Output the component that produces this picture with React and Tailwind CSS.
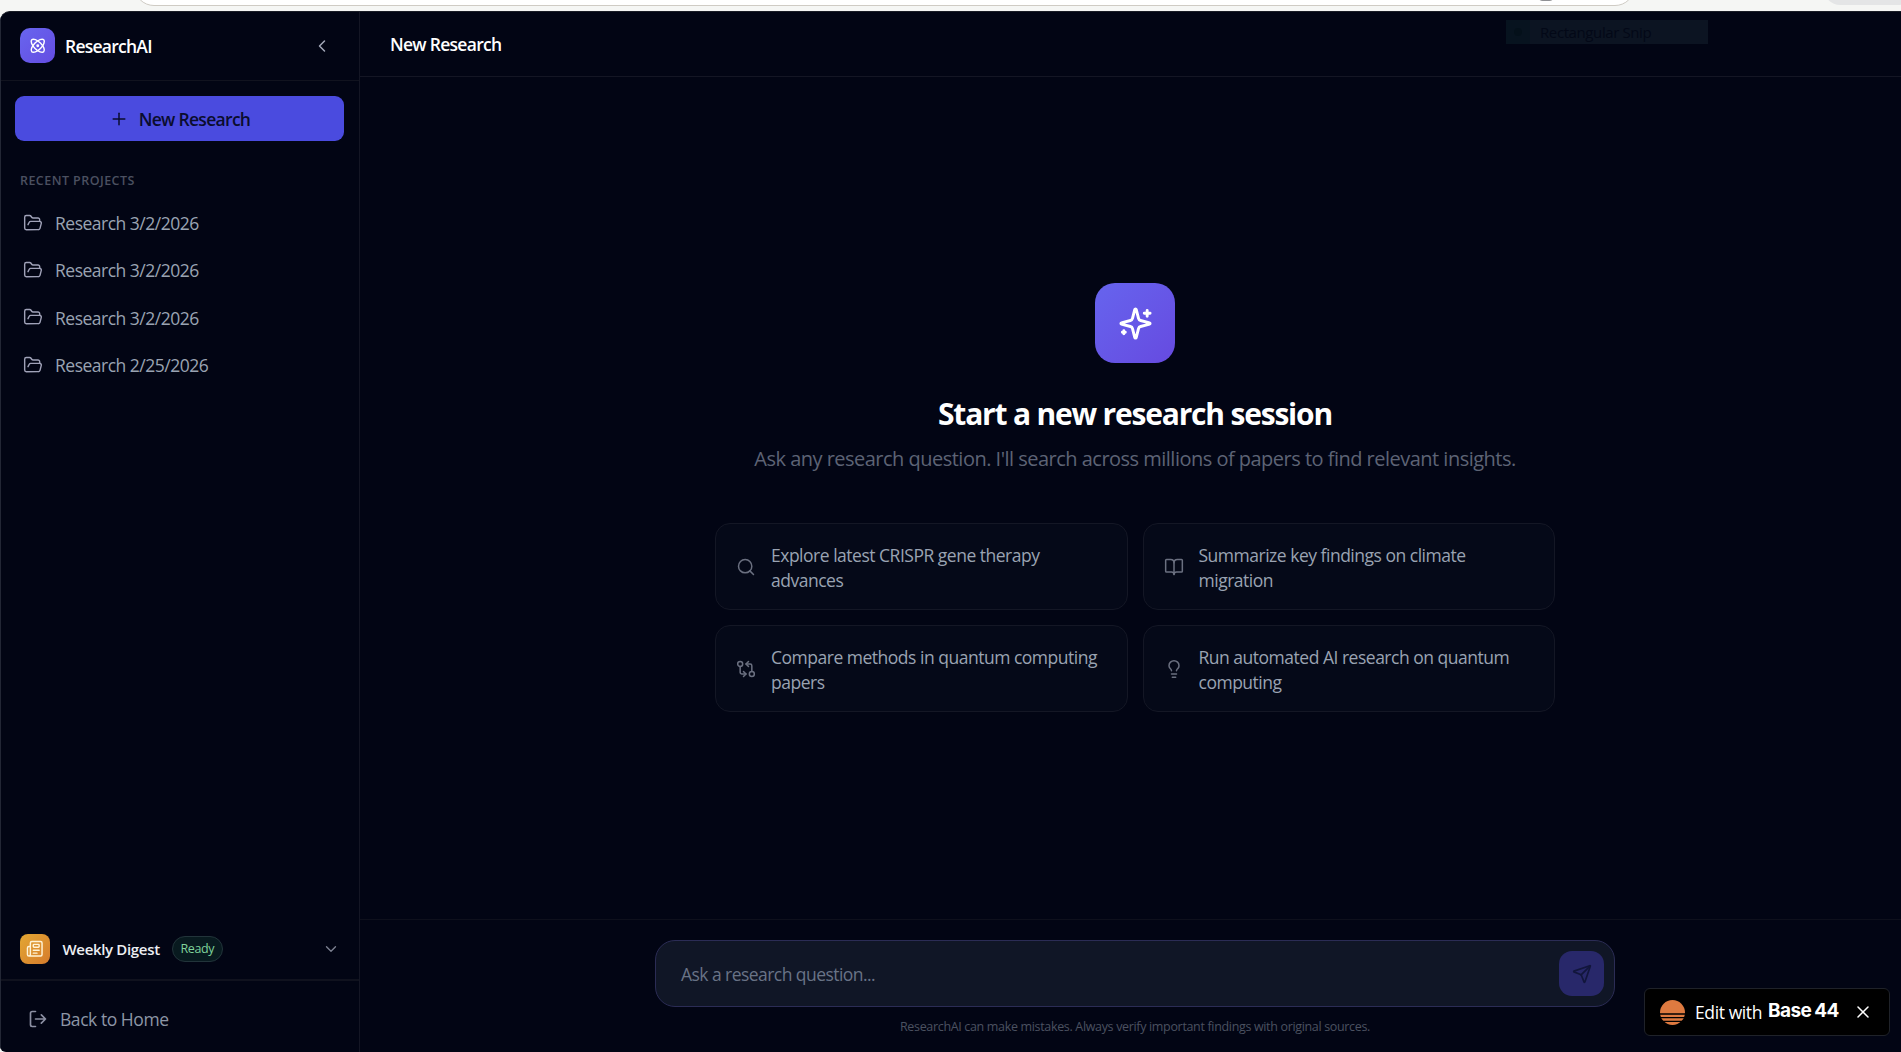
import { Atom, BookOpen, ChevronDown, ChevronLeft, FolderOpen, GitCompareArrows, Lightbulb, Newspaper, Plus, Search, Send, X } from 'lucide-react';

const PROJECTS = ['Research 3/2/2026', 'Research 3/2/2026', 'Research 3/2/2026', 'Research 2/25/2026'];

const SUGGESTIONS = [
    { icon: Search, lines: ['Explore latest CRISPR gene therapy', 'advances'] },
    { icon: BookOpen, lines: ['Summarize key findings on climate', 'migration'] },
    { icon: GitCompareArrows, lines: ['Compare methods in quantum computing', 'papers'] },
    { icon: Lightbulb, lines: ['Run automated AI research on quantum', 'computing'] },
];

function SparklesIcon({ className }) {
    return (
        <svg viewBox="0 0 24 24" fill="none" stroke="currentColor" strokeWidth="2" strokeLinecap="round" strokeLinejoin="round" className={className}>
            <path d="M9.937 15.5A2 2 0 0 0 8.5 14.063l-6.135-1.582a.5.5 0 0 1 0-.962L8.5 9.936A2 2 0 0 0 9.937 8.5l1.582-6.135a.5.5 0 0 1 .963 0L14.063 8.5A2 2 0 0 0 15.5 9.937l6.135 1.581a.5.5 0 0 1 0 .964L15.5 14.063a2 2 0 0 0-1.437 1.437l-1.582 6.135a.5.5 0 0 1-.963 0z" />
            <path d="M20 3v4M22 5h-4M4 17v2M5 18H3" />
        </svg>
    );
}

function ExitIcon({ className }) {
    return (
        <svg viewBox="0 0 24 24" fill="none" stroke="currentColor" strokeWidth="2" strokeLinecap="round" strokeLinejoin="round" className={className}>
            <path d="M9 21H5a2 2 0 0 1-2-2V5a2 2 0 0 1 2-2h4" />
            <path d="m16 17 5-5-5-5M21 12H9" />
        </svg>
    );
}

function SunLogo({ className }) {
    return (
        <svg viewBox="0 0 25 25" className={className}>
            <circle cx="12.5" cy="12.5" r="12.5" fill="#de7a40" />
            <path d="M0 14h25M0 17.6h25M0 21.4h25" stroke="#000" strokeWidth="1.3" />
        </svg>
    );
}

function BrowserEdge() {
    return (
        <div className="relative h-[11px] shrink-0 overflow-hidden bg-[#f5f6f4]">
            <div className="absolute -top-[35px] left-[134px] h-[41px] w-[1501px] rounded-[20px] border border-[#cfcbc4] bg-white" />
            <div className="absolute -top-[8px] left-[1538px] h-[9px] w-4 rounded-full bg-[#8f9094]" />
            <div className="absolute -top-[30px] left-[1824px] h-[35px] w-[90px] rounded-2xl bg-[#e4e5e6]" />
        </div>
    );
}

function Sidebar() {
    return (
        <aside className="flex w-[360px] shrink-0 flex-col border-r border-l border-r-[#141624] border-l-[#232735]">
            <div className="flex h-[69px] shrink-0 items-center border-b border-[#11131f] pr-[27px] pb-px pl-[19px]">
                <div className="flex size-[35px] items-center justify-center rounded-[10px] bg-gradient-to-br from-[#6865ee] to-[#644ce2]">
                    <Atom className="size-[17.5px] text-white" />
                </div>
                <span className="ml-2.5 pt-px text-[17.5px] font-semibold tracking-[-0.75px] text-white">ResearchAI</span>
                <ChevronLeft className="ml-auto size-5 text-[#a3a8b8]" strokeWidth={1.8} />
            </div>

            <div className="pt-[15px] pr-[15px] pl-[14px]">
                <button className="flex h-[45px] w-full items-center justify-center gap-[10px] rounded-[9px] bg-[#4a4bdf] text-[#0a0d2e]">
                    <Plus className="size-5" strokeWidth={1.8} />
                    <span className="pt-px text-[17.5px] font-[550] tracking-[-0.7px]">New Research</span>
                </button>
            </div>

            <h2 className="mt-[30px] ml-[19px] text-[12.5px] leading-5 font-[550] tracking-[0.45px] text-[#4b5060]">RECENT PROJECTS</h2>
            <ul className="mt-2.5">
                {PROJECTS.map((name, i) => (
                    <li key={i} className="flex h-[47.4px] items-center gap-3 pl-[22px] text-[#9aa3b2]">
                        <FolderOpen className="-mt-1 size-5 text-[#a0a2b8]" strokeWidth={1.7} />
                        <span className="-mt-[3px] text-[17.5px] tracking-[-0.5px]">{name}</span>
                    </li>
                ))}
            </ul>

            <div className="mt-auto flex h-[60px] shrink-0 items-center pr-[19px] pl-[19px]">
                <div className="flex size-[30px] items-center justify-center rounded-[8px] bg-gradient-to-br from-[#e3a733] to-[#d57b2c]">
                    <Newspaper className="size-[17.5px] text-[#fff3d6]" />
                </div>
                <span className="ml-[12.5px] pt-px text-[15px] font-semibold tracking-[-0.33px] text-[#eceef2]">Weekly Digest</span>
                <span className="ml-3 flex h-[26px] w-[51px] items-center justify-center rounded-full border border-[#22343a] bg-[#081a1f] pt-px text-[12.5px] tracking-[-0.4px] text-[#7fd39b]">Ready</span>
                <ChevronDown className="ml-auto size-[18px] text-[#7d8191]" strokeWidth={1.8} />
            </div>
            <div className="flex h-[73px] shrink-0 items-center gap-[12px] border-t-2 border-[#10121e] pt-[5px] pl-[27px] text-[#8d96a6]">
                <ExitIcon className="size-5 text-[#8c90a3]" />
                <span className="pt-px text-[17.5px] tracking-[-0.45px]">Back to Home</span>
            </div>
        </aside>
    );
}

function Suggestion({ icon: Icon, lines }) {
    return (
        <button className="flex h-[87px] items-center gap-[15px] rounded-[15px] border border-[#141725] bg-[#050918] pl-5 text-left">
            <Icon className="size-5 shrink-0 text-[#6b7080]" strokeWidth={1.8} />
            <span className="pt-[2px] text-[17.5px] leading-[25px] tracking-[-0.49px] whitespace-nowrap text-[#9aa3b2]">
                {lines[0]}
                <br />
                {lines[1]}
            </span>
        </button>
    );
}

function Composer() {
    return (
        <footer className="flex h-[133px] shrink-0 flex-col items-center border-t border-[#0e101c] pt-5 pl-[9px]">
            <div className="flex h-[67px] w-[960px] items-center justify-between rounded-[20px] border border-[#2b2c55] bg-[#101626] pr-[10px] pl-[25px]">
                <span className="pt-[2px] text-[17.5px] tracking-[-0.55px] text-[#697386]">Ask a research question...</span>
                <button className="flex size-[45px] items-center justify-center rounded-[13px] bg-[#28286a]">
                    <Send className="size-5 text-[#12163c]" />
                </button>
            </div>
            <p className="mt-[10px] text-[12.5px] leading-5 tracking-[-0.335px] text-[#4b5160]">
                ResearchAI can make mistakes. Always verify important findings with original sources.
            </p>
        </footer>
    );
}

function SnipTooltip() {
    return (
        <div className="absolute top-[8px] left-[1506px] flex h-6 w-[202px] items-center bg-[#0c1422]">
            <span className="flex h-full w-6 items-center justify-center bg-[#07131f]">
                <span className="size-2 rounded-full bg-[#04101a]" />
            </span>
            <span className="ml-[10px] text-[15px] tracking-[-0.4px] text-[#030817]">Rectangular Snip</span>
        </div>
    );
}

function EditBadge() {
    return (
        <div className="absolute right-[11px] bottom-[16px] flex h-12 w-[246px] items-center rounded-[6px] border border-[#1f2229] bg-black pl-[15px] text-white">
            <SunLogo className="size-[25px] shrink-0" />
            <span className="ml-[10px] pt-px text-[17.5px] tracking-[-0.4px] whitespace-nowrap">Edit with</span>
            <span className="ml-[6px] -mt-px font-['Inter'] text-[19px] font-bold tracking-[-0.6px] whitespace-nowrap">
                Base<span className="ml-[3px]">44</span>
            </span>
            <X className="mr-[16px] ml-auto size-5 shrink-0" strokeWidth={1.8} />
        </div>
    );
}

export default function App() {
    return (
        <div className="flex h-[1052px] w-[1901px] flex-col overflow-hidden bg-[#f5f6f4] font-['Open_Sans','Noto_Sans',sans-serif]">
            <BrowserEdge />
            <div className="relative flex min-h-0 flex-1 overflow-hidden rounded-tl-[10px] rounded-bl-[6px] border-t border-[#1a1d26] bg-[#020514]">
                <Sidebar />
                <main className="flex min-w-0 flex-1 flex-col">
                    <header className="flex h-[65px] shrink-0 items-center border-b border-[#141624] pt-px pl-[30px]">
                        <h1 className="text-[17.5px] font-semibold tracking-[-0.72px] text-white">New Research</h1>
                    </header>
                    <section className="flex flex-1 flex-col items-center pt-[206px] pl-[9px]">
                        <div className="flex size-20 items-center justify-center rounded-[20px] bg-gradient-to-br from-[#6664ee] to-[#664ae0]">
                            <SparklesIcon className="size-[35px] text-white" />
                        </div>
                        <h2 className="mt-[31px] text-[30px] leading-10 font-bold tracking-[-1.2px] text-white">Start a new research session</h2>
                        <p className="mt-[10px] text-[20px] leading-[30px] tracking-[-0.515px] text-[#5d6375]">
                            Ask any research question. I'll search across millions of papers to find relevant insights.
                        </p>
                        <div className="mt-[49px] grid w-[840px] grid-cols-2 gap-[15px]">
                            {SUGGESTIONS.map((item) => (
                                <Suggestion key={item.lines[0]} {...item} />
                            ))}
                        </div>
                    </section>
                    <Composer />
                </main>
                <SnipTooltip />
                <EditBadge />
            </div>
        </div>
    );
}
